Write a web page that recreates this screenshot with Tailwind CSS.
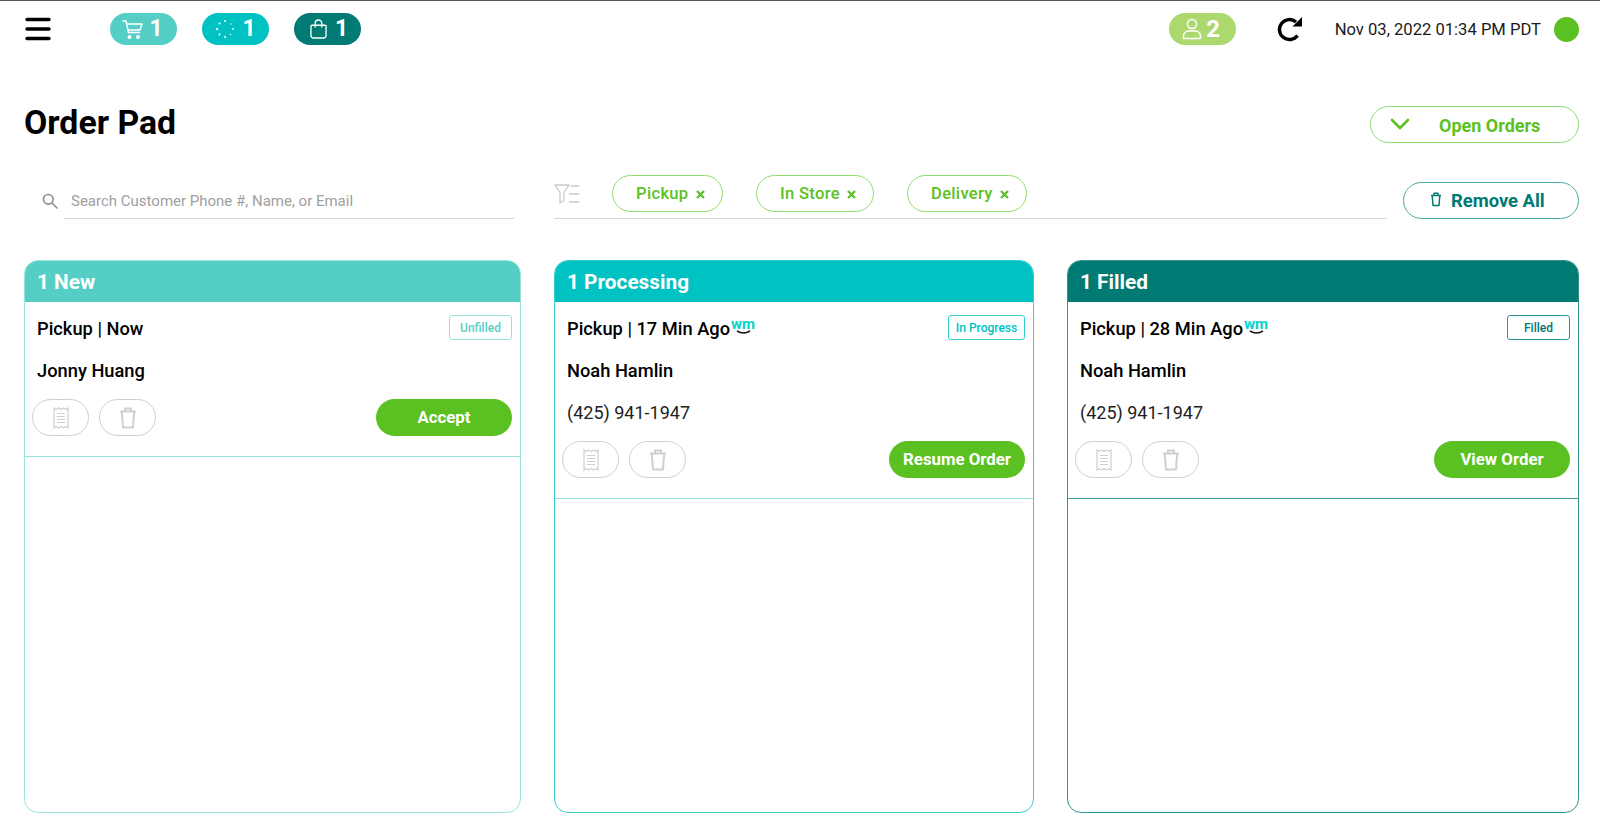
<!DOCTYPE html>
<html lang="en">
<head>
    <meta charset="UTF-8">
    <meta name="viewport" content="width=device-width, initial-scale=1.0">
    <title>Order Pad</title>
    <script src="https://cdn.jsdelivr.net/npm/@tailwindcss/browser@4"></script>
</head>
<body class="bg-white font-['Roboto',sans-serif] text-black w-[1600px] h-[827px] overflow-hidden">

    <!-- Top bar -->
    <header class="h-[59px] border-t border-t-[#555] flex items-center pl-[25px] pr-[21px] pb-[2px]">
        <svg class="w-[26px] h-[24px] text-black" viewBox="0 0 26 24" fill="none" stroke="currentColor" stroke-width="3.4" stroke-linecap="round">
            <path d="M2 2.5h22M2 12h22M2 21.5h22"/>
        </svg>
        <div class="flex items-center gap-[25px] ml-[59px]">
            <div class="w-[67px] h-[32px] rounded-full bg-[#55cfc5] text-white flex items-center justify-center gap-[6px] text-[23px] font-bold pr-[2px]">
                <svg class="w-[21px] h-[21px]" viewBox="0 0 21 21" fill="none" stroke="currentColor" stroke-width="1.4" stroke-linejoin="round" stroke-linecap="round">
                    <path d="M1 2h3l2.5 11.5h11M4.6 5H20l-2 6H6"/>
                    <circle cx="7.5" cy="18" r="1.3" fill="currentColor"/><circle cx="16" cy="18" r="1.3" fill="currentColor"/>
                </svg>
                <span>1</span>
            </div>
            <div class="w-[67px] h-[32px] rounded-full bg-[#00c2c2] text-white flex items-center justify-center gap-[7px] text-[23px] font-bold">
                <svg class="w-[20px] h-[20px]" viewBox="0 0 20 20" fill="currentColor">
                    <circle cx="10" cy="2" r="1.1"/><circle cx="16" cy="5" r=".7"/><circle cx="18" cy="10" r="1"/><circle cx="15.5" cy="15.5" r=".7"/>
                    <circle cx="10" cy="18" r="1"/><circle cx="4.5" cy="15.5" r="1"/><circle cx="2" cy="10" r="1.2"/><circle cx="4.5" cy="4.5" r="1"/>
                </svg>
                <span>1</span>
            </div>
            <div class="w-[67px] h-[32px] rounded-full bg-[#007a72] text-white flex items-center justify-center gap-[8px] text-[23px] font-bold pl-[3px]">
                <svg class="w-[17px] h-[20px]" viewBox="0 0 18 21" fill="none" stroke="currentColor" stroke-width="1.4" stroke-linejoin="round">
                    <path d="M2 6.5h14a1 1 0 0 1 1 1V17a3 3 0 0 1-3 3H4a3 3 0 0 1-3-3V7.5a1 1 0 0 1 1-1zM5.5 9V4.5a3.5 3.5 0 0 1 7 0V9"/>
                </svg>
                <span>1</span>
            </div>
        </div>
        <div class="ml-auto flex items-center">
            <div class="w-[67px] h-[32px] rounded-full bg-[#acd96e] text-white flex items-center justify-center gap-[4px] text-[24px] font-bold pr-[2px]">
                <svg class="w-[20px] h-[22px]" viewBox="0 0 20 22" fill="none" stroke="currentColor" stroke-width="1.5">
                    <circle cx="10" cy="6" r="4.5"/><path d="M1.5 20.5V18a5 5 0 0 1 5-5h7a5 5 0 0 1 5 5v2.5z" stroke-linejoin="round"/>
                </svg>
                <span>2</span>
            </div>
            <svg class="w-[26px] h-[26px] ml-[41px] text-black" viewBox="0 0 26 26" fill="none">
                <path d="M20.5 19.5A10 10 0 1 1 19 6" stroke="currentColor" stroke-width="3.4"/>
                <path d="M25 1v9.5h-9.5z" fill="currentColor"/>
            </svg>
            <span class="ml-[32px] mt-[2px] text-[16.6px] text-[#1a1a1a] whitespace-nowrap">Nov 03, 2022 01:34 PM PDT</span>
            <div class="ml-[13px] w-[25px] h-[25px] rounded-full bg-[#5bc122]"></div>
        </div>
    </header>

    <!-- Title -->
    <div class="h-[116px] flex pl-[24px] pr-[21px]">
        <h1 class="text-[33.8px] leading-[38px] font-bold mt-[45px]">Order Pad</h1>
        <button class="ml-auto mt-[47px] w-[209px] h-[37px] rounded-full border border-[#8fdc6d] bg-white text-[#5bc122] flex items-center text-[18px] font-bold pl-[19px] pt-[1px]">
            <svg class="w-[20px] h-[12px] mb-[3px]" viewBox="0 0 20 12" fill="none" stroke="currentColor" stroke-width="2.6" stroke-linecap="round" stroke-linejoin="round">
                <path d="M2 2l8 8 8-8"/>
            </svg>
            <span class="ml-[29px]">Open Orders</span>
        </button>
    </div>

    <!-- Search and filters -->
    <div class="h-[44px] flex items-end pl-[42px] pr-[21px]">
        <div class="w-[472px] flex items-center h-[36px]">
            <svg class="w-[16px] h-[16px] text-[#8e8e8e] mt-[-1px] shrink-0" viewBox="0 0 16 16" fill="none" stroke="currentColor" stroke-width="1.7">
                <circle cx="6.3" cy="6.3" r="4.8"/><path d="M10 10l5 5" stroke-linecap="round"/>
            </svg>
            <div class="ml-[6px] h-[36px] flex-1 border-b border-[#d8d8d8] flex items-center pl-[7px] pt-[2px] text-[15px] text-[#a0a0a0] whitespace-nowrap">Search Customer Phone #, Name, or Email</div>
        </div>
        <div class="ml-[40px] w-[833px] h-[44px] border-b border-[#d8d8d8] flex items-start">
            <svg class="w-[25px] h-[20px] mt-[9px] text-[#c9c9c9] shrink-0" viewBox="0 0 25 20" fill="none" stroke="currentColor" stroke-width="1.3" stroke-linejoin="round">
                <path d="M1 1h14l-5 7.5v8L6 19V8.5zM17 2h8M15 10h10M15 18h10"/>
            </svg>
            <div class="ml-[33px] flex gap-[33px]">
                <div class="h-[37px] w-[111px] rounded-full border border-[#8fdc6d] text-[#5bc122] text-[16.6px] font-medium flex items-center pl-[23px] pt-[1px] gap-[7px] tracking-[0.3px]">Pickup
                    <svg class="w-[9px] h-[9px]" viewBox="0 0 9 9" stroke="currentColor" stroke-width="2.2"><path d="M1 1l7 7M8 1l-7 7"/></svg>
                </div>
                <div class="h-[37px] w-[118px] rounded-full border border-[#8fdc6d] text-[#5bc122] text-[16.6px] font-medium flex items-center pl-[23px] pt-[1px] gap-[7px] tracking-[0.3px]">In Store
                    <svg class="w-[9px] h-[9px]" viewBox="0 0 9 9" stroke="currentColor" stroke-width="2.2"><path d="M1 1l7 7M8 1l-7 7"/></svg>
                </div>
                <div class="h-[37px] w-[120px] rounded-full border border-[#8fdc6d] text-[#5bc122] text-[16.6px] font-medium flex items-center pl-[23px] pt-[1px] gap-[7px] tracking-[0.3px]">Delivery
                    <svg class="w-[9px] h-[9px]" viewBox="0 0 9 9" stroke="currentColor" stroke-width="2.2"><path d="M1 1l7 7M8 1l-7 7"/></svg>
                </div>
            </div>
        </div>
        <button class="ml-auto w-[176px] h-[37px] rounded-full border border-[#4aa9a2] bg-white text-[#007a72] text-[18.4px] font-bold flex items-center pl-[26px] pt-[1px] gap-[9px]">
            <svg class="w-[12px] h-[15px] mb-[3px]" viewBox="0 0 12 15" fill="none" stroke="currentColor" stroke-width="1.5" stroke-linejoin="round">
                <path d="M1 3.5h10M4 3.5V1.2h4v2.3M2.2 3.5l.8 10h6l.8-10"/>
            </svg>
            Remove All
        </button>
    </div>

    <!-- Order columns -->
    <main class="mt-[41px] flex gap-[33px] pl-[24px]">
        <section class="w-[497px] h-[553px] rounded-[14px] border border-[#99e3dd] flex flex-col overflow-hidden">
            <h2 class="h-[41px] bg-[#55cfc5] text-white text-[20.8px] font-bold flex items-center pl-[12px] pt-[3px] shrink-0">1 New</h2>
            <div class="h-[155px] border-b border-[#99e3dd] pl-[7px] pr-[8px] flex flex-col">
                <div class="flex justify-between pt-[13px] h-[54px]">
                    <p class="pl-[5px] text-[18.3px] font-medium leading-[28px]">Pickup | Now</p>
                    <span class="w-[63px] h-[25px] rounded-[3px] border border-[#99e3dd] text-[#55cfc5] text-[12px] font-medium flex items-center justify-center">Unfilled</span>
                </div>
                <p class="pl-[5px] text-[18.3px] font-medium leading-[28px] mt-[1px]">Jonny Huang</p>
                <div class="flex items-center gap-[10px] mt-[14px]">
                    <button class="w-[57px] h-[37px] rounded-full border border-[#cfcfcf] flex items-center justify-center text-[#cfcfcf]">
                        <svg class="w-[16px] h-[22px]" viewBox="0 0 16 22" fill="none" stroke="currentColor" stroke-width="1.2"><path d="M1 1l2 1.5L5.5 1 8 2.5 10.5 1 13 2.5 15 1v20l-2-1.5-2.5 1.5L8 19.5 5.5 21 3 19.5 1 21zM4 6.5h8M4 9.5h8M4 12.5h8M4 15.5h8"/></svg>
                    </button>
                    <button class="w-[57px] h-[37px] rounded-full border border-[#cfcfcf] flex items-center justify-center text-[#cfcfcf]">
                        <svg class="w-[18px] h-[22px]" viewBox="0 0 18 22" fill="none" stroke="currentColor" stroke-width="2" stroke-linejoin="round"><path d="M1 4.5h16M6 4.5v-3h6v3M2.8 4.5l1.2 16h10l1.2-16"/></svg>
                    </button>
                    <button class="ml-auto w-[136px] h-[37px] rounded-full bg-[#5bc122] text-white text-[16.8px] font-bold pt-[1px]">Accept</button>
                </div>
            </div>
        </section>

        <section class="w-[480px] h-[553px] rounded-[14px] border border-[#33cfcf] flex flex-col overflow-hidden">
            <h2 class="h-[41px] bg-[#00c2c2] text-white text-[20.8px] font-bold flex items-center pl-[12px] pt-[3px] shrink-0">1 Processing</h2>
            <div class="h-[197px] border-b border-[#8ce3e0] pl-[7px] pr-[8px] flex flex-col">
                <div class="flex justify-between pt-[13px] h-[54px]">
                    <p class="pl-[5px] text-[18.3px] font-medium leading-[28px] flex">Pickup | 17 Min Ago
                        <svg class="w-[26px] h-[20px] ml-[1px] mt-[5px] overflow-visible" viewBox="0 0 26 20" fill="none"><text x="0" y="9" font-size="15" font-weight="700" fill="#00d4cc" font-family="Roboto">wm</text><path d="M6 11q6.5 4 13 0" stroke="#111" stroke-width="1.5"/></svg>
                    </p>
                    <span class="w-[77px] h-[25px] rounded-[3px] border border-[#33cfcf] text-[#00c2c2] text-[12px] font-medium flex items-center justify-center">In Progress</span>
                </div>
                <p class="pl-[5px] text-[18.3px] font-medium leading-[28px] mt-[1px]">Noah Hamlin</p>
                <p class="pl-[5px] text-[18px] leading-[28px] mt-[14px] text-[#222]">(425) 941-1947</p>
                <div class="flex items-center gap-[10px] mt-[14px]">
                    <button class="w-[57px] h-[37px] rounded-full border border-[#cfcfcf] flex items-center justify-center text-[#cfcfcf]">
                        <svg class="w-[16px] h-[22px]" viewBox="0 0 16 22" fill="none" stroke="currentColor" stroke-width="1.2"><path d="M1 1l2 1.5L5.5 1 8 2.5 10.5 1 13 2.5 15 1v20l-2-1.5-2.5 1.5L8 19.5 5.500 21 3 19.5 1 21zM4 6.5h8M4 9.5h8M4 12.5h8M4 15.5h8"/></svg>
                    </button>
                    <button class="w-[57px] h-[37px] rounded-full border border-[#cfcfcf] flex items-center justify-center text-[#cfcfcf]">
                        <svg class="w-[18px] h-[22px]" viewBox="0 0 18 22" fill="none" stroke="currentColor" stroke-width="2" stroke-linejoin="round"><path d="M1 4.5h16M6 4.5v-3h6v3M2.8 4.5l1.2 16h10l1.2-16"/></svg>
                    </button>
                    <button class="ml-auto w-[136px] h-[37px] rounded-full bg-[#5bc122] text-white text-[16.8px] font-bold pt-[1px]">Resume Order</button>
                </div>
            </div>
        </section>

        <section class="w-[512px] h-[553px] rounded-[14px] border border-[#2e938c] flex flex-col overflow-hidden">
            <h2 class="h-[41px] bg-[#007a72] text-white text-[20.8px] font-bold flex items-center pl-[12px] pt-[3px] shrink-0">1 Filled</h2>
            <div class="h-[197px] border-b border-[#3d9f98] pl-[7px] pr-[8px] flex flex-col">
                <div class="flex justify-between pt-[13px] h-[54px]">
                    <p class="pl-[5px] text-[18.3px] font-medium leading-[28px] flex">Pickup | 28 Min Ago
                        <svg class="w-[26px] h-[20px] ml-[1px] mt-[5px] overflow-visible" viewBox="0 0 26 20" fill="none"><text x="0" y="9" font-size="15" font-weight="700" fill="#00d4cc" font-family="Roboto">wm</text><path d="M6 11q6.5 4 13 0" stroke="#111" stroke-width="1.5"/></svg>
                    </p>
                    <span class="w-[63px] h-[25px] rounded-[3px] border border-[#2e938c] text-[#007a72] text-[12px] font-medium flex items-center justify-center">Filled</span>
                </div>
                <p class="pl-[5px] text-[18.3px] font-medium leading-[28px] mt-[1px]">Noah Hamlin</p>
                <p class="pl-[5px] text-[18px] leading-[28px] mt-[14px] text-[#222]">(425) 941-1947</p>
                <div class="flex items-center gap-[10px] mt-[14px]">
                    <button class="w-[57px] h-[37px] rounded-full border border-[#cfcfcf] flex items-center justify-center text-[#cfcfcf]">
                        <svg class="w-[16px] h-[22px]" viewBox="0 0 16 22" fill="none" stroke="currentColor" stroke-width="1.2"><path d="M1 1l2 1.5L5.5 1 8 2.5 10.5 1 13 2.5 15 1v20l-2-1.5-2.5 1.5L8 19.5 5.5 21 3 19.5 1 21zM4 6.5h8M4 9.5h8M4 12.5h8M4 15.5h8"/></svg>
                    </button>
                    <button class="w-[57px] h-[37px] rounded-full border border-[#cfcfcf] flex items-center justify-center text-[#cfcfcf]">
                        <svg class="w-[18px] h-[22px]" viewBox="0 0 18 22" fill="none" stroke="currentColor" stroke-width="2" stroke-linejoin="round"><path d="M1 4.5h16M6 4.5v-3h6v3M2.8 4.5l1.2 16h10l1.2-16"/></svg>
                    </button>
                    <button class="ml-auto w-[136px] h-[37px] rounded-full bg-[#5bc122] text-white text-[16.8px] font-bold pt-[1px]">View Order</button>
                </div>
            </div>
        </section>
    </main>
</body>
</html>
